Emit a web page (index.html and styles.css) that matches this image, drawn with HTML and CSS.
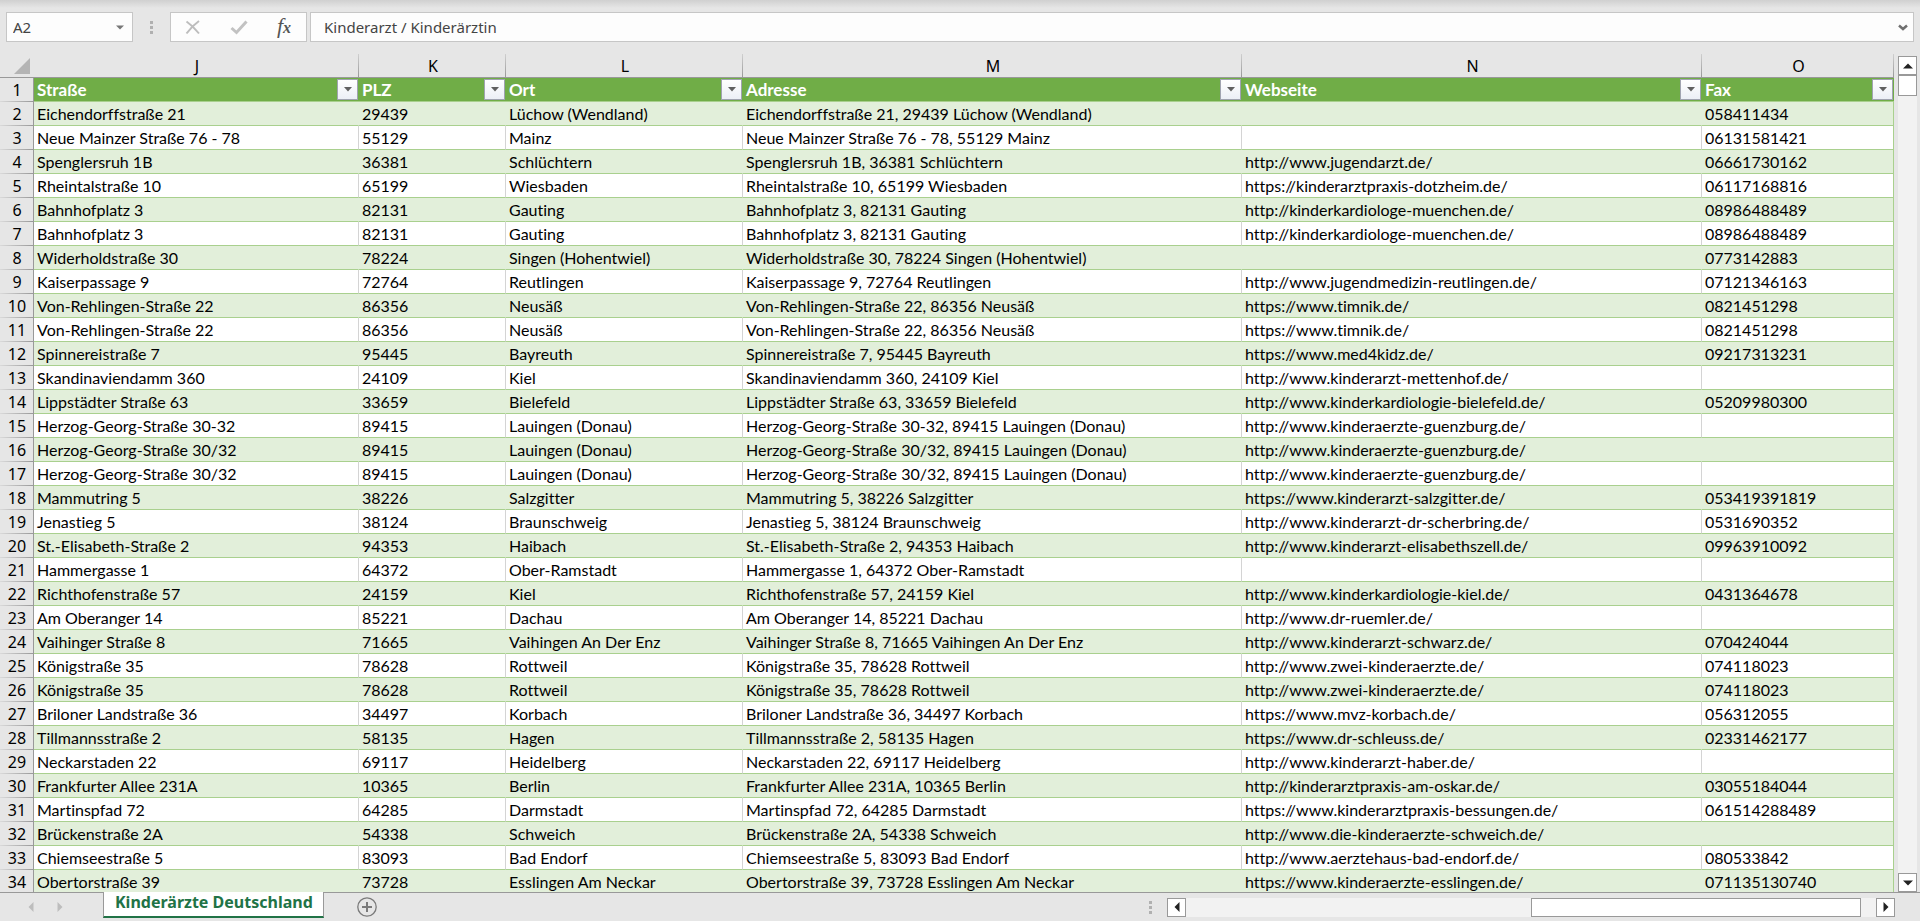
FILE: index.html
```
<!DOCTYPE html>
<html lang="de">
<head>
<meta charset="utf-8">
<title>Kinderärzte Deutschland</title>
<link rel="stylesheet" href="styles.css">
</head>
<body>
<header class="formula-bar">
  <div class="box name-box">
    <input class="field name-field" aria-label="Namenfeld" value="A2">
    <button class="plain name-drop" aria-label="Namen anzeigen"><svg width="8" height="5" viewBox="0 0 8 5"><path d="M0 0.500h8L4 4.500z" fill="#777"/></svg></button>
  </div>
  <div class="dots"><i></i><i></i><i></i></div>
  <div class="box fx-box">
    <button class="plain" aria-label="Abbrechen"><svg width="16" height="15" viewBox="0 0 16 15"><path d="M1.500 1.500Q8 6 14 13.500M14 1Q7 6 1.500 13.500" fill="none" stroke="#bdbdbd" stroke-width="2"/></svg></button>
    <button class="plain" aria-label="Eingeben"><svg width="18" height="15" viewBox="0 0 18 15"><path d="M1.500 8L6.500 12.500L16.500 1.500" fill="none" stroke="#c2c2c2" stroke-width="3"/></svg></button>
    <button class="plain fx" aria-label="Funktion einfügen"><span class="fx-f">f</span><span class="fx-x">x</span></button>
  </div>
  <div class="box formula-box">
    <input class="field formula-field" aria-label="Bearbeitungsleiste" value="Kinderarzt / Kinderärztin">
    <button class="plain expand" aria-label="Bearbeitungsleiste erweitern"><svg width="10" height="7" viewBox="0 0 10 7"><path d="M1 1.500L5 5L9 1.500" fill="none" stroke="#707070" stroke-width="2.500"/></svg></button>
  </div>
</header>

<main class="workspace">
  <div class="sheet">
    <table class="grid">
      <colgroup><col class="c-num"><col class="c-j"><col class="c-k"><col class="c-l"><col class="c-m"><col class="c-n"><col class="c-o"></colgroup>
      <thead>
        <tr class="letters"><th class="corner"><svg width="16" height="16" viewBox="0 0 16 16"><path d="M16 0v16H0z" fill="#b4b4b4"/></svg></th><th>J</th><th>K</th><th>L</th><th>M</th><th>N</th><th>O</th></tr>
      </thead>
      <tbody id="rows"></tbody>
    </table>
  </div>
  <div class="vscroll">
    <button class="arrow" aria-label="Nach oben"><svg width="10" height="6" viewBox="0 0 10 6"><path d="M0 5.500L5 0.500L10 5.500z" fill="#222"/></svg></button>
    <div class="vthumb"></div>
    <div class="track"></div>
    <button class="arrow" aria-label="Nach unten"><svg width="10" height="6" viewBox="0 0 10 6"><path d="M0 0.500L5 5.500L10 0.500z" fill="#222"/></svg></button>
  </div>
</main>

<footer class="tab-bar">
  <div class="sheet-nav">
    <button class="plain" aria-label="Vorheriges Blatt"><svg width="6" height="10" viewBox="0 0 6 10"><path d="M5.500 0v10L0.500 5z" fill="#bdbdbd"/></svg></button>
    <button class="plain" aria-label="Nächstes Blatt"><svg width="6" height="10" viewBox="0 0 6 10"><path d="M0.500 0v10L5.500 5z" fill="#bdbdbd"/></svg></button>
  </div>
  <button class="tab">Kinderärzte Deutschland</button>
  <button class="plain add" aria-label="Neues Blatt"><svg width="20" height="20" viewBox="0 0 20 20"><circle cx="10" cy="10" r="9.200" fill="none" stroke="#7a7a7a" stroke-width="1.300"/><path d="M10 5v10M5 10h10" stroke="#7a7a7a" stroke-width="2"/></svg></button>
  <div class="hscroll">
    <div class="dots"><i></i><i></i><i></i></div>
    <button class="arrow" aria-label="Nach links"><svg width="6" height="10" viewBox="0 0 6 10"><path d="M5.500 0v10L0.500 5z" fill="#222"/></svg></button>
    <div class="track"></div>
    <div class="hthumb"></div>
    <div class="track-end"></div>
    <button class="arrow" aria-label="Nach rechts"><svg width="6" height="10" viewBox="0 0 6 10"><path d="M0.500 0v10L5.500 5z" fill="#222"/></svg></button>
  </div>
</footer>
<script src="grid.js"></script>
</body>
</html>
```

FILE: grid.js
```
// Straße | PLZ | Ort | Webseite | Fax
const data = `Eichendorffstraße 21|29439|Lüchow (Wendland)||058411434
Neue Mainzer Straße 76 - 78|55129|Mainz||06131581421
Spenglersruh 1B|36381|Schlüchtern|http://www.jugendarzt.de/|06661730162
Rheintalstraße 10|65199|Wiesbaden|https://kinderarztpraxis-dotzheim.de/|06117168816
Bahnhofplatz 3|82131|Gauting|http://kinderkardiologe-muenchen.de/|08986488489
Bahnhofplatz 3|82131|Gauting|http://kinderkardiologe-muenchen.de/|08986488489
Widerholdstraße 30|78224|Singen (Hohentwiel)||0773142883
Kaiserpassage 9|72764|Reutlingen|http://www.jugendmedizin-reutlingen.de/|07121346163
Von-Rehlingen-Straße 22|86356|Neusäß|https://www.timnik.de/|0821451298
Von-Rehlingen-Straße 22|86356|Neusäß|https://www.timnik.de/|0821451298
Spinnereistraße 7|95445|Bayreuth|https://www.med4kidz.de/|09217313231
Skandinaviendamm 360|24109|Kiel|http://www.kinderarzt-mettenhof.de/|
Lippstädter Straße 63|33659|Bielefeld|http://www.kinderkardiologie-bielefeld.de/|05209980300
Herzog-Georg-Straße 30-32|89415|Lauingen (Donau)|http://www.kinderaerzte-guenzburg.de/|
Herzog-Georg-Straße 30/32|89415|Lauingen (Donau)|http://www.kinderaerzte-guenzburg.de/|
Herzog-Georg-Straße 30/32|89415|Lauingen (Donau)|http://www.kinderaerzte-guenzburg.de/|
Mammutring 5|38226|Salzgitter|https://www.kinderarzt-salzgitter.de/|053419391819
Jenastieg 5|38124|Braunschweig|http://www.kinderarzt-dr-scherbring.de/|0531690352
St.-Elisabeth-Straße 2|94353|Haibach|http://www.kinderarzt-elisabethszell.de/|09963910092
Hammergasse 1|64372|Ober-Ramstadt||
Richthofenstraße 57|24159|Kiel|http://www.kinderkardiologie-kiel.de/|0431364678
Am Oberanger 14|85221|Dachau|http://www.dr-ruemler.de/|
Vaihinger Straße 8|71665|Vaihingen An Der Enz|http://www.kinderarzt-schwarz.de/|070424044
Königstraße 35|78628|Rottweil|http://www.zwei-kinderaerzte.de/|074118023
Königstraße 35|78628|Rottweil|http://www.zwei-kinderaerzte.de/|074118023
Briloner Landstraße 36|34497|Korbach|https://www.mvz-korbach.de/|056312055
Tillmannsstraße 2|58135|Hagen|https://www.dr-schleuss.de/|02331462177
Neckarstaden 22|69117|Heidelberg|http://www.kinderarzt-haber.de/|
Frankfurter Allee 231A|10365|Berlin|http://kinderarztpraxis-am-oskar.de/|03055184044
Martinspfad 72|64285|Darmstadt|https://www.kinderarztpraxis-bessungen.de/|061514288489
Brückenstraße 2A|54338|Schweich|http://www.die-kinderaerzte-schweich.de/|
Chiemseestraße 5|83093|Bad Endorf|http://www.aerztehaus-bad-endorf.de/|080533842
Obertorstraße 39|73728|Esslingen Am Neckar|https://www.kinderaerzte-esslingen.de/|071135130740`;

const heads = ['Straße', 'PLZ', 'Ort', 'Adresse', 'Webseite', 'Fax'];
const arrow = '<svg width="8" height="5" viewBox="0 0 8 5"><path d="M0 0h8L4 4.500z" fill="#606060"/></svg>';

const headRow = '<tr class="heads"><th class="num">1</th>' + heads.map(h =>
  `<th scope="col"><div class="head"><span>${h}</span><button class="filter" aria-label="${h} filtern">${arrow}</button></div></th>`
).join('') + '</tr>';

const body = data.split('\n').map((line, i) => {
  const [street, zip, city, site, fax] = line.split('|');
  const cells = [street, zip, city, `${street}, ${zip} ${city}`, site, fax];
  return `<tr class="row"><th class="num">${i + 2}</th>` + cells.map(c => `<td>${c}</td>`).join('') + '</tr>';
}).join('');

document.getElementById('rows').innerHTML = headRow + body;
```

FILE: styles.css
```
* { box-sizing: border-box; }

body {
  margin: 0;
  height: 100vh;
  display: flex;
  flex-direction: column;
  overflow: hidden;
  background: #e6e6e6;
  font-family: "Noto Sans", sans-serif;
  font-size: 15px;
  color: #444;
}

svg { display: block; }

.plain {
  display: flex;
  align-items: center;
  justify-content: center;
  padding: 0;
  border: 0;
  background: none;
}

/* formula bar */
.formula-bar {
  display: flex;
  flex: none;
  padding: 12px 6px 12px;
  background: linear-gradient(#d0d0d0, #e6e6e6 8px);
}

.box {
  display: flex;
  height: 30px;
  border: 1px solid #c6c6c6;
  background: #fdfdfd;
}

.name-box { width: 127px; }
.name-drop { width: 24px; }

.field {
  flex: 1;
  min-width: 0;
  padding: 0 6px 1px;
  border: 0;
  background: none;
  font: inherit;
  color: inherit;
}

.formula-field { padding: 0 13px 1px; }

.dots {
  display: flex;
  flex-direction: column;
  justify-content: center;
  gap: 2px;
}

.dots i {
  width: 3px;
  height: 3px;
  background: #b0b0b0;
}

.formula-bar .dots { margin: 0 17px 0 17px; }

.fx-box {
  width: 137px;
  justify-content: space-between;
  padding: 0 15px 0 14px;
}

.fx {
  font-family: "Liberation Serif", serif;
  font-style: italic;
  padding-bottom: 3px;
  color: #555;
}

.fx-f { font-size: 22px; line-height: 24px; }
.fx-x { font-size: 16px; font-weight: bold; padding-top: 5px; }

.formula-box {
  flex: 1;
  margin-left: 3px;
}

.expand { width: 20px; }

/* grid */
.workspace {
  flex: 1;
  min-height: 0;
  display: flex;
}

.sheet {
  flex: 1;
  min-width: 0;
  overflow: hidden;
}

.grid {
  width: 100%;
  table-layout: fixed;
  border-collapse: separate;
  border-spacing: 0;
  border-right: 1px solid #999;
  font-size: 16px;
  font-variant-ligatures: none;
  color: #000;
}

.c-num { width: 34px; }
.c-j { width: 325px; }
.c-k { width: 147px; }
.c-l { width: 237px; }
.c-m { width: 499px; }
.c-n { width: 460px; }
.c-o { width: 192px; }

.grid th, .grid td {
  height: 24px;
  padding: 0 2px 0 3px;
  line-height: 22px;
  white-space: nowrap;
  overflow: hidden;
}

.letters th {
  border-bottom: 1px solid #999;
  background: linear-gradient(#cfcfcf, #999) right / 1px 100% no-repeat #e6e6e6;
  font-weight: normal;
}

.letters .corner {
  padding-left: 14px;
  background: #e6e6e6;
}

.grid .num {
  border-right: 1px solid #999;
  background: linear-gradient(to right, #dadada, #999) bottom / 100% 1px no-repeat #e6e6e6;
  font-weight: normal;
}

.heads th:not(.num) {
  padding-right: 1px;
  border-bottom: 1px solid #a9d08e;
  background: #70ad47;
  font-family: Lato, sans-serif;
  font-size: 17px;
  font-weight: bold;
  color: #fff;
  text-align: left;
}

.head {
  display: flex;
  align-items: center;
  justify-content: space-between;
}

.filter {
  display: flex;
  align-items: center;
  justify-content: center;
  width: 21px;
  height: 21px;
  padding: 0;
  border: 1px solid #a0a3b0;
  background: linear-gradient(#fff, #eceff6);
}

.row td {
  border-bottom: 1px solid #a9d08e;
  border-right: 1px solid #d4d4d4;
  background: #fff;
  font-family: Lato, sans-serif;
}

.row:nth-child(even) td {
  border-right-color: #e2efda;
  background: #e2efda;
}

.grid .row td:last-child { border-right-color: #a9d08e; }

/* scroll bars */
.vscroll {
  flex: none;
  display: flex;
  flex-direction: column;
  width: 26px;
  padding: 2px 3px 0 4px;
}

.arrow {
  flex: none;
  display: flex;
  align-items: center;
  justify-content: center;
  width: 19px;
  height: 19px;
  padding: 0;
  border: 1px solid #999;
  background: #fff;
}

.vthumb {
  width: 19px;
  height: 21px;
  border: 1px solid #999;
  background: #fff;
}

.track {
  flex: 1;
  background: #f2f2f2;
}

.tab-bar {
  flex: none;
  display: flex;
  height: 29px;
  padding-right: 25px;
  border-top: 1px solid #999;
}

.sheet-nav {
  display: flex;
  gap: 23px;
  width: 103px;
  padding: 0 0 0 28px;
}

.tab {
  height: 26px;
  margin-top: -1px;
  padding: 0 10px 3px 11px;
  border: solid #999;
  border-width: 0 1px;
  border-bottom: 2px solid #217346;
  background: #fff;
  font: bold 16px/21px "Noto Sans", sans-serif;
  color: #217346;
}

.add { margin-left: 33px; }

.hscroll {
  display: flex;
  align-items: center;
  width: 746px;
  margin-left: auto;
}

.hscroll .dots { margin-right: 15px; }
.hscroll .track { height: 19px; }

.hthumb {
  width: 330px;
  height: 19px;
  border: 1px solid #999;
  background: #fff;
}

.track-end {
  width: 15px;
  height: 19px;
  background: #f2f2f2;
}
```
